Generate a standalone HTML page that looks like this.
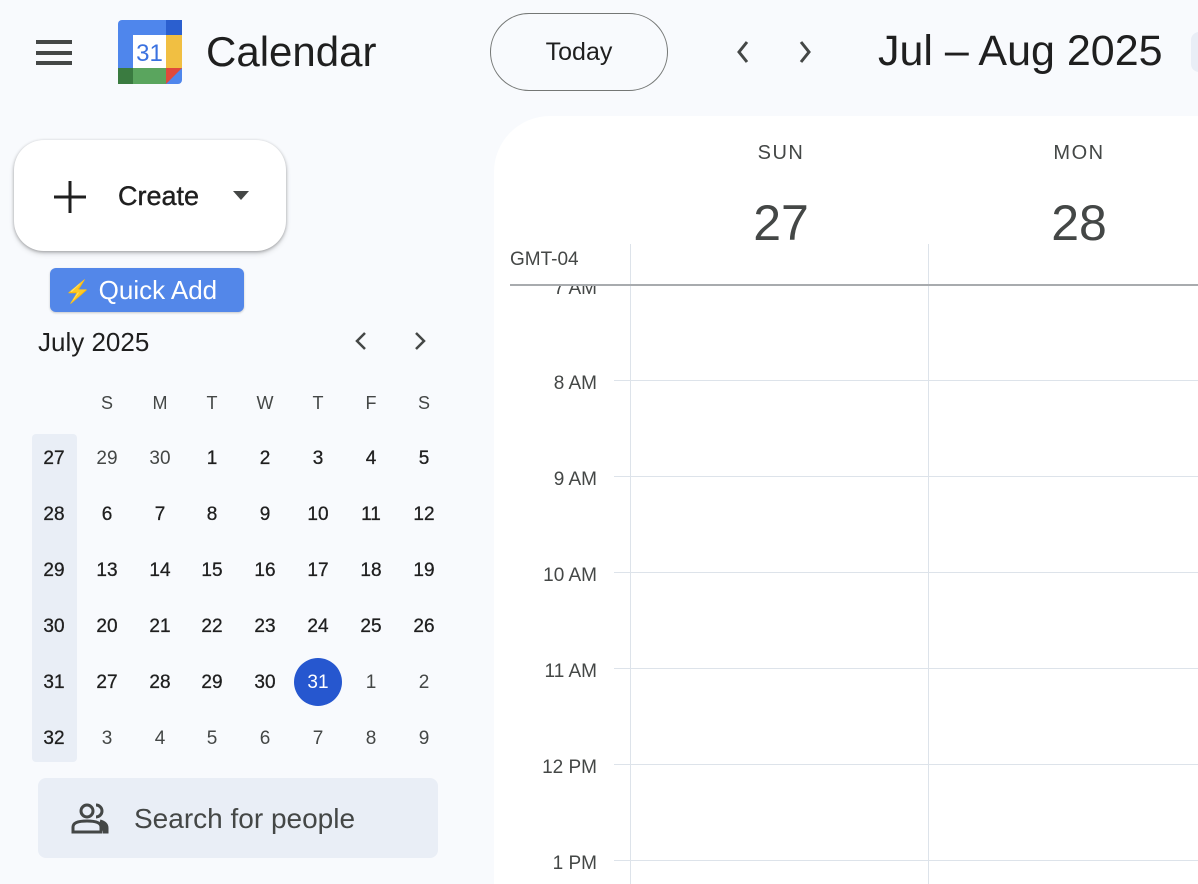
<!DOCTYPE html>
<html><head><style>
*{margin:0;padding:0;box-sizing:border-box}
html,body{width:1198px;height:884px;overflow:hidden}
body{background:#f8fafd;font-family:"Liberation Sans",sans-serif;position:relative;color:#1f1f1f}
.a{position:absolute}
.c{position:absolute;transform:translateX(-50%);text-align:center;white-space:nowrap}
.hl{position:absolute;left:614px;right:0;height:1px;background:#dde3ea}
.tl{position:absolute;right:601px;font-size:19px;color:#444746;white-space:nowrap}
</style></head><body>
<div class="a" style="left:36px;top:40px;width:36px;height:4px;background:#444746"></div>
<div class="a" style="left:36px;top:51px;width:36px;height:4px;background:#444746"></div>
<div class="a" style="left:36px;top:61px;width:36px;height:4px;background:#444746"></div>
<svg class="a" style="left:118px;top:20px" width="64" height="64" viewBox="0 0 64 64">
<rect x="0" y="0" width="64" height="64" rx="4" fill="#4f86ec"/>
<rect x="48" y="0" width="16" height="16" fill="#2b5fcf"/>
<rect x="48" y="15" width="16" height="33" fill="#f1bf42"/>
<rect x="0" y="48" width="48" height="16" fill="#5aa55e"/>
<rect x="0" y="48" width="15" height="16" fill="#3a7b40"/>
<polygon points="48,48 64,48 48,64" fill="#e0493b"/>
<rect x="15" y="15" width="33" height="33" fill="#fff"/>
<text x="31.5" y="41" font-size="24" font-family="Liberation Sans" fill="#3b72e0" text-anchor="middle">31</text>
</svg>
<div class="a" style="left:206px;top:28px;font-size:42px;color:#1f1f1f">Calendar</div>
<div class="a" style="left:490px;top:13px;width:178px;height:78px;border:1.5px solid #747775;border-radius:40px;font-size:25px;text-align:center;line-height:76px;color:#1f1f1f">Today</div>
<svg class="a" style="left:728px;top:38px" width="100" height="30"><path d="M19 4 L11 14 L19 24" stroke="#444746" stroke-width="3" fill="none"/><path d="M73 4 L81 14 L73 24" stroke="#444746" stroke-width="3" fill="none"/></svg>
<div class="a" style="left:878px;top:27px;font-size:43px;color:#1f1f1f;white-space:nowrap">Jul – Aug 2025</div>
<div class="a" style="left:1191px;top:32px;width:20px;height:40px;background:#e9eef6;border-radius:8px"></div>
<div class="a" style="left:14px;top:140px;width:272px;height:111px;background:#fff;border-radius:30px;box-shadow:0 1px 3px rgba(0,0,0,.3),0 3px 6px rgba(0,0,0,.12)"></div>
<svg class="a" style="left:53px;top:180px" width="34" height="34"><path d="M17 1 V33 M1 17 H33" stroke="#1f1f1f" stroke-width="3"/></svg>
<div class="a" style="left:118px;top:181px;font-size:27px;color:#1f1f1f;-webkit-text-stroke:0.4px #1f1f1f">Create</div>
<svg class="a" style="left:233px;top:191px" width="18" height="10"><path d="M0 0 H16 L8 9 Z" fill="#444746"/></svg>
<div class="a" style="left:50px;top:268px;width:194px;height:44px;background:#5387e9;border-radius:6px;color:#fff;font-size:26px;line-height:44px;padding-left:14px;white-space:nowrap;box-shadow:0 1px 2px rgba(0,0,0,.2)"><span style="color:#f6b73c;font-size:22px">⚡</span> Quick Add</div>
<div class="a" style="left:38px;top:327px;font-size:26px;color:#1f1f1f">July 2025</div>
<svg class="a" style="left:350px;top:330px" width="80" height="24"><path d="M15 3 L7 11 L15 19" stroke="#444746" stroke-width="2.5" fill="none"/><path d="M66 3 L74 11 L66 19" stroke="#444746" stroke-width="2.5" fill="none"/></svg>
<div class="a" style="left:32px;top:434px;width:45px;height:328px;background:#e9eef6;border-radius:4px"></div>
<div id="mc"></div>
<div class="a" style="left:38px;top:778px;width:400px;height:80px;background:#e9eef6;border-radius:8px"></div>
<svg class="a" style="left:70px;top:802px" width="40" height="32" viewBox="0 0 40 32"><circle cx="17" cy="9" r="6" stroke="#444746" stroke-width="3" fill="none"/><path d="M3 30 V25 Q3 19 17 19 Q31 19 31 25 V30 Z" stroke="#444746" stroke-width="3" fill="none"/><path d="M26 3 A6 6 0 0 1 26 15" stroke="#444746" stroke-width="3" fill="none"/><path d="M30 19 Q37 21 37 26 V30 H33" stroke="#444746" stroke-width="3" fill="#444746"/></svg>
<div class="a" style="left:134px;top:803px;font-size:28px;color:#444746">Search for people</div>
<div class="a" style="left:494px;top:116px;width:704px;height:768px;background:#fff;border-top-left-radius:56px"></div>
<div class="c" style="left:781px;top:142px;font-size:20px;letter-spacing:1.5px;color:#444746">SUN</div>
<div class="c" style="left:1079px;top:142px;font-size:20px;letter-spacing:1.5px;color:#444746">MON</div>
<div class="c" style="left:781px;top:194px;font-size:50px;color:#444746">27</div>
<div class="c" style="left:1079px;top:194px;font-size:50px;color:#444746">28</div>
<div class="a" style="left:510px;top:249px;font-size:19px;color:#444746">GMT-04</div>
<div class="a" style="left:630px;top:244px;width:1px;height:640px;background:#dde3ea"></div>
<div class="a" style="left:928px;top:244px;width:1px;height:640px;background:#dde3ea"></div>
<div class="tl" style="top:278px;clip-path:inset(8px 0 0 0)">7 AM</div>
<div class="a" style="left:510px;top:284px;right:0;height:2px;background:#a8abae"></div>
<div class="hl" style="top:380px"></div><div class="tl" style="top:373px">8 AM</div>
<div class="hl" style="top:476px"></div><div class="tl" style="top:469px">9 AM</div>
<div class="hl" style="top:572px"></div><div class="tl" style="top:565px">10 AM</div>
<div class="hl" style="top:668px"></div><div class="tl" style="top:661px">11 AM</div>
<div class="hl" style="top:764px"></div><div class="tl" style="top:757px">12 PM</div>
<div class="hl" style="top:860px"></div><div class="tl" style="top:853px">1 PM</div>
<script>
var xs=[54,107,160,212,265,318,371,424],h=['','S','M','T','W','T','F','S'];
var rows=[[27,29,30,1,2,3,4,5],[28,6,7,8,9,10,11,12],[29,13,14,15,16,17,18,19],[30,20,21,22,23,24,25,26],[31,27,28,29,30,31,1,2],[32,3,4,5,6,7,8,9]];
var s='';
for(var i=1;i<8;i++)s+='<div class="c" style="left:'+xs[i]+'px;top:393px;font-size:18px;color:#444746">'+h[i]+'</div>';
rows.forEach(function(r,ri){var y=458+ri*56;r.forEach(function(v,ci){var col=(ri==0&&ci>=1&&ci<=2)||(ri==4&&ci>=6)||ri==5?'#444746':'#1f1f1f';if(ci==0)col='#1f1f1f';
var st='';
if(ri==4&&ci==5){s+='<div class="a" style="left:294px;top:658px;width:48px;height:48px;border-radius:50%;background:#2657cf"></div>';col='#fff';}
if(col=='#1f1f1f')st='-webkit-text-stroke:0.3px #1f1f1f;';
s+='<div class="c" style="left:'+xs[ci]+'px;top:'+(y-10)+'px;font-size:19px;'+st+'color:'+col+'">'+v+'</div>';});});
document.getElementById('mc').innerHTML=s;
</script>
</body></html>
